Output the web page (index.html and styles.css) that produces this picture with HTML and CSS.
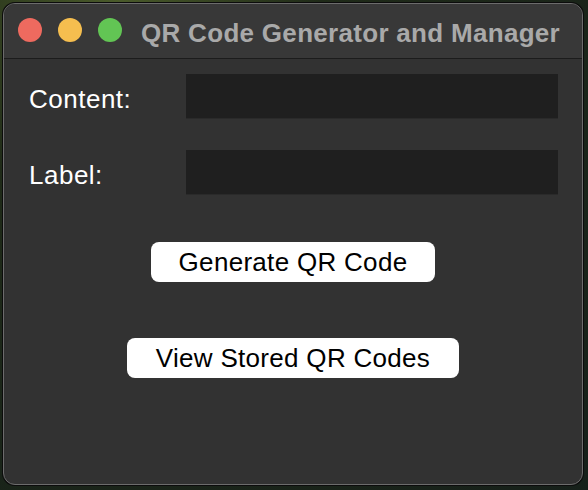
FILE: index.html
```html
<!DOCTYPE html>
<html>
<head>
<meta charset="utf-8">
<link rel="stylesheet" href="styles.css">
</head>
<body>
<div class="window">
  <div class="titlebar">
    <span class="light red"></span>
    <span class="light yellow"></span>
    <span class="light green"></span>
    <span class="title">QR Code Generator and Manager</span>
  </div>
  <div class="content">
    <div class="row">
      <span class="label">Content:</span>
      <div class="input"></div>
    </div>
    <div class="row">
      <span class="label">Label:</span>
      <div class="input"></div>
    </div>
    <div class="buttons">
      <button class="btn btn-generate">Generate QR Code</button>
      <button class="btn btn-view">View Stored QR Codes</button>
    </div>
  </div>
</div>
</body>
</html>
```
FILE: styles.css
```css
html, body {
  margin: 0;
  padding: 0;
}
body {
  width: 588px;
  height: 490px;
  background: radial-gradient(circle at 20% 0%, #4a5a2a 0%, #1f2a18 30%, #16201a 100%);
  font-family: "Liberation Sans", Arial, sans-serif;
  padding: 3px;
  box-sizing: border-box;
}
.window {
  width: 580px;
  height: 482px;
  box-sizing: border-box;
  border: 1px solid #6c6c6c;
  border-radius: 12px;
  box-shadow: 0 0 0 1px #0c0c0c;
  background: #323232;
  overflow: hidden;
  display: flex;
  flex-direction: column;
}
.titlebar {
  height: 40px;
  flex: none;
  background: #383838;
  border-bottom: 1px solid #1c1c1c;
  display: flex;
  align-items: flex-start;
  padding: 14px 0 0 14px;
}
.light {
  width: 24px;
  height: 24px;
  border-radius: 50%;
  flex: none;
  margin-right: 16px;
}
.red { background: #ee6a5f; }
.yellow { background: #f5be4f; }
.green { background: #62c554; }
.title {
  margin-left: 3px;
  margin-top: -0.5px;
  font-weight: bold;
  font-size: 26px;
  line-height: 30px;
  color: #a9a9a9;
  letter-spacing: 0.3px;
  white-space: nowrap;
}
.content {
  padding: 15px 0 0 25px;
  display: flex;
  flex-direction: column;
}
.row {
  display: flex;
  align-items: flex-start;
  margin-bottom: 32px;
}
.label {
  width: 157px;
  flex: none;
  margin-top: 10px;
  font-size: 26px;
  line-height: 30px;
  letter-spacing: 0.5px;
  color: #ffffff;
}
.input {
  width: 372px;
  height: 44px;
  background: #1f1f1f;
  box-shadow: 0 1px 0 #2a2a2a;
}
.buttons {
  display: flex;
  flex-direction: column;
  align-items: center;
  margin-left: -25px;
  margin-top: 16px;
}
.btn {
  height: 40px;
  padding: 0 29px;
  border: none;
  border-radius: 8px;
  background: #ffffff;
  color: #000000;
  font-family: "Liberation Sans", Arial, sans-serif;
  font-size: 26px;
  line-height: 40px;
  letter-spacing: 0.3px;
}
.btn-generate {
  padding: 0 28px;
}
.btn-view {
  margin-top: 56px;
}
```
